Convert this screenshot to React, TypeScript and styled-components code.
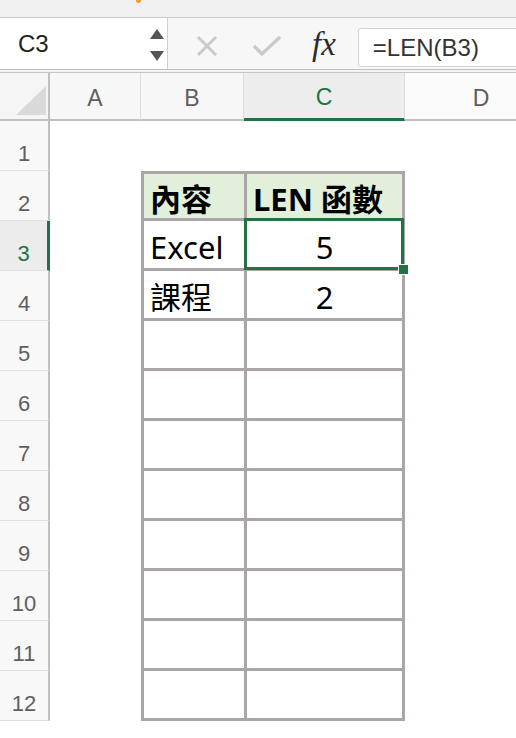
import React from 'react';
import styled, { createGlobalStyle, css } from 'styled-components';

const GREEN = '#217346';
const TABLE_LINE = '#aaa6a6';

const columns = ['A', 'B', 'C', 'D'];
const selectedCol = 'C';
const selectedRow = 3;

// данные таблицы: строка -> [B, C]
const cells: Record<number, [string, string]> = {
    2: ['內容', 'LEN 函數'],
    3: ['Excel', '5'],
    4: ['課程', '2'],
};

const rows = Array.from({ length: 12 }, (_, i) => i + 1);

const GlobalStyle = createGlobalStyle`
  html, body {
    margin: 0;
    padding: 0;
    overflow: hidden;
    background: #fff;
  }
  body {
    font-family: "Liberation Sans", Arial, sans-serif;
  }
`;

const App: React.FC = () => {
    return (
        <>
            <GlobalStyle />
            <Page>
                <TopStrip>
                    <OrangeMark />
                </TopStrip>
                <FormulaBar>
                    <NameBox>
                        <NameText>C3</NameText>
                        <Spinner>
                            <svg width="14" height="10" viewBox="0 0 14 10">
                                <polygon points="7,0 14,10 0,10" fill="#555" />
                            </svg>
                            <svg width="14" height="10" viewBox="0 0 14 10">
                                <polygon points="0,0 14,0 7,10" fill="#555" />
                            </svg>
                        </Spinner>
                    </NameBox>
                    <Actions>
                        <ActionIcon $gap={28}>
                            <svg width="22" height="22" viewBox="0 0 22 22">
                                <path d="M2 2 L20 20 M20 2 L2 20" stroke="#cacaca" strokeWidth="3" />
                            </svg>
                        </ActionIcon>
                        <ActionIcon $gap={34}>
                            <svg width="30" height="22" viewBox="0 0 30 22">
                                <path d="M2 11 L10 19 L28 2" stroke="#cacaca" strokeWidth="3.4" fill="none" />
                            </svg>
                        </ActionIcon>
                        <FxLabel>fx</FxLabel>
                        <FormulaInput>=LEN(B3)</FormulaInput>
                    </Actions>
                </FormulaBar>
                <BarGap />
                <HeaderRow>
                    <Corner>
                        <svg width="32" height="32" viewBox="0 0 32 32">
                            <polygon points="32,2 32,31 2,31" fill="#d9d9d9" />
                        </svg>
                    </Corner>
                    {columns.map(col => (
                        <ColHeader key={col} $active={col === selectedCol}>
                            {col}
                        </ColHeader>
                    ))}
                </HeaderRow>
                <Sheet>
                    {rows.map(r => {
                        const data = cells[r];
                        const inTable = r >= 2;
                        return (
                            <React.Fragment key={r}>
                                <RowHeader $active={r === selectedRow}>{r}</RowHeader>
                                <Cell />
                                {inTable ? (
                                    <TableCell $col="B" $first={r === 2} $head={r === 2}>
                                        {data ? data[0] : ''}
                                    </TableCell>
                                ) : (
                                    <Cell />
                                )}
                                {inTable ? (
                                    <TableCell
                                        $col="C"
                                        $first={r === 2}
                                        $head={r === 2}
                                        $center={r !== 2}
                                        $selected={r === selectedRow}
                                    >
                                        {data ? data[1] : ''}
                                        {r === selectedRow && <FillHandle />}
                                    </TableCell>
                                ) : (
                                    <Cell />
                                )}
                                <Cell />
                            </React.Fragment>
                        );
                    })}
                </Sheet>
            </Page>
        </>
    );
};

export default App;

// Стили
const Page = styled.div`
  width: 516px;
  height: 738px;
  overflow: hidden;
  background: #fff;
`;

const TopStrip = styled.div`
  height: 18px;
  box-sizing: border-box;
  background: #f0f0f0;
  border-bottom: 1px solid #c9c9c9;
  display: flex;
  align-items: flex-start;
`;

const OrangeMark = styled.span`
  margin-left: 136px;
  width: 5px;
  height: 3px;
  border-radius: 0 0 3px 3px;
  background: #f39a3b;
`;

const FormulaBar = styled.div`
  height: 52px;
  box-sizing: border-box;
  display: flex;
  border-bottom: 1px solid #c2c2c2;
`;

const NameBox = styled.div`
  width: 168px;
  box-sizing: border-box;
  background: #fff;
  border-right: 1px solid #d0d0d0;
  display: flex;
  align-items: center;
  justify-content: space-between;
  padding: 0 3px 0 18px;
`;

const NameText = styled.span`
  font-size: 24px;
  color: #222;
`;

const Spinner = styled.div`
  display: flex;
  flex-direction: column;
  gap: 12px;
  margin-top: 2px;

  svg {
    display: block;
  }
`;

const Actions = styled.div`
  flex: 1;
  display: flex;
  align-items: center;
  background: #f7f7f7;
  overflow: hidden;
`;

const ActionIcon = styled.span<{ $gap: number }>`
  display: flex;
  margin-left: ${p => p.$gap}px;
  margin-top: 4px;
`;

const FxLabel = styled.span`
  margin-left: 30px;
  font-family: "Liberation Serif", "Times New Roman", serif;
  font-style: italic;
  font-size: 33px;
  color: #2b2b2b;
  margin-top: 2px;
`;

const FormulaInput = styled.div`
  flex: 1;
  align-self: flex-end;
  margin: 0 -4px 2px 22px;
  height: 39px;
  box-sizing: border-box;
  background: #fff;
  border: 1px solid #d4d4d4;
  border-radius: 3px;
  display: flex;
  align-items: center;
  padding-left: 14px;
  font-size: 24px;
  color: #333;
`;

const BarGap = styled.div`
  height: 3px;
  box-sizing: border-box;
  background: #f2f2f2;
  border-bottom: 1px solid #c6c6c6;
`;

const gridColumns = css`
  display: grid;
  grid-template-columns: 50px 91px 103px 161px 152px;
`;

const HeaderRow = styled.div`
  ${gridColumns};
  height: 48px;
`;

const Corner = styled.div`
  box-sizing: border-box;
  background: #f5f5f5;
  border-right: 2px solid #c0c0c0;
  border-bottom: 2px solid #c0c0c0;
  display: flex;
  align-items: flex-end;
  justify-content: flex-end;
  padding: 0 2px 3px 0;
`;

const ColHeader = styled.div<{ $active?: boolean }>`
  box-sizing: border-box;
  display: flex;
  align-items: center;
  justify-content: center;
  padding-top: 4px;
  font-size: 23px;
  color: ${p => (p.$active ? GREEN : '#5e5e5e')};
  background: ${p => (p.$active ? '#ededed' : '#f7f7f7')};
  border-right: 1px solid #dcdcdc;
  border-bottom: ${p => (p.$active ? `3px solid ${GREEN}` : '2px solid #c0c0c0')};

  &:last-child {
    background: #fafafa;
    border-right: none;
  }
`;

const Sheet = styled.div`
  ${gridColumns};
  grid-auto-rows: 50px;
`;

const RowHeader = styled.div<{ $active?: boolean }>`
  box-sizing: border-box;
  display: flex;
  align-items: flex-end;
  justify-content: center;
  padding-bottom: 5px;
  line-height: 22px;
  font-size: 22px;
  color: ${p => (p.$active ? GREEN : '#5f5f5f')};
  background: ${p => (p.$active ? '#ececec' : '#f8f8f8')};
  border-right: ${p => (p.$active ? `3px solid ${GREEN}` : '2px solid #c0c0c0')};
  border-bottom: 1px solid #e0e0e0;
`;

const Cell = styled.div`
  background: #fff;
`;

const TableCell = styled.div<{
    $col: 'B' | 'C';
    $first?: boolean;
    $head?: boolean;
    $center?: boolean;
    $selected?: boolean;
}>`
  position: relative;
  box-sizing: border-box;
  display: flex;
  align-items: center;
  justify-content: ${p => (p.$center ? 'center' : 'flex-start')};
  padding: 5px 0 0 ${p => (p.$center ? 0 : 6)}px;
  font-family: "Noto Sans", "Noto Sans CJK TC", sans-serif;
  font-size: 31px;
  line-height: 36px;
  font-weight: ${p => (p.$head ? 700 : 400)};
  white-space: nowrap;
  color: #000;
  background: ${p => (p.$head ? '#e2efda' : '#fff')};
  border-left: 3px solid ${TABLE_LINE};
  border-bottom: 3px solid ${TABLE_LINE};
  border-top: ${p => (p.$first ? `3px solid ${TABLE_LINE}` : 'none')};
  border-right: ${p => (p.$col === 'C' ? `3px solid ${TABLE_LINE}` : 'none')};

  ${p =>
    p.$selected &&
    css`
      &::after {
        content: '';
        position: absolute;
        top: -3px;
        left: -3px;
        right: -2px;
        bottom: -2px;
        border: 3px solid ${GREEN};
      }
    `}
`;

const FillHandle = styled.span`
  position: absolute;
  right: -7px;
  bottom: -7px;
  width: 9px;
  height: 9px;
  background: ${GREEN};
  border: 1px solid #fff;
  z-index: 1;
`;
